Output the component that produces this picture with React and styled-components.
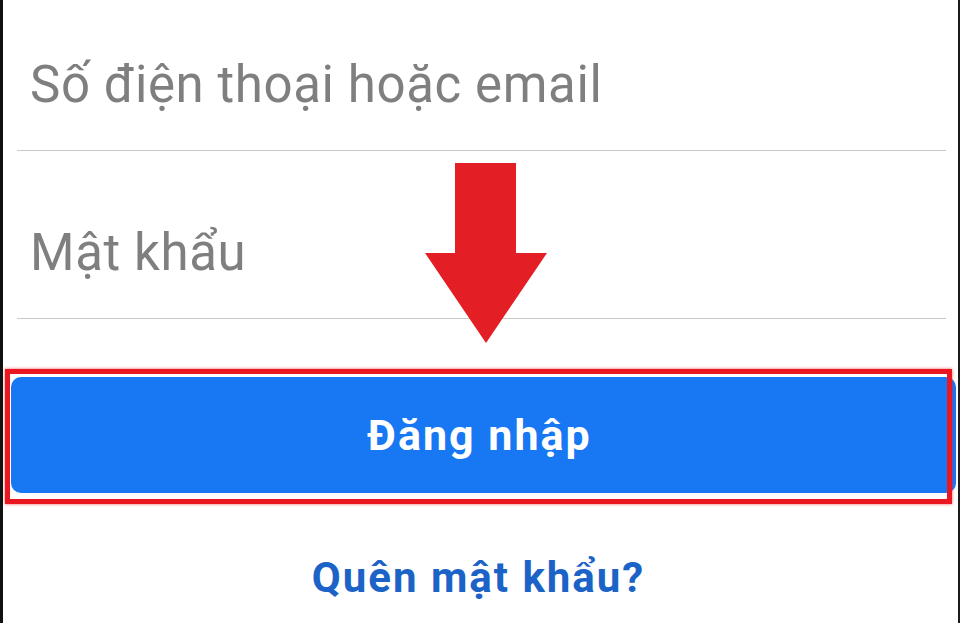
import React from "react";
import styled, { createGlobalStyle } from "styled-components";

const GlobalStyle = createGlobalStyle`
  html, body {
    margin: 0;
    padding: 0;
    background: #ffffff;
  }
  * {
    box-sizing: border-box;
  }
`;

const Frame = styled.div`
  position: relative;
  width: 960px;
  height: 623px;
  overflow: hidden;
  background: #ffffff;
  border-left: 3px solid #111111;
  border-right: 2px solid #1c1c1c;
  font-family: Roboto, "Noto Sans", sans-serif;
  display: flex;
  flex-direction: column;
`;

const Field = styled.div`
  height: ${(p) => p.$height}px;
  margin: 0 12px 0 14px;
  padding: 0 0 40px 13px;
  border-bottom: 1.5px solid #c9c9c9;
  display: flex;
  align-items: flex-end;
`;

const Placeholder = styled.span`
  font-size: 51px;
  line-height: 1;
  letter-spacing: 0.6px;
  color: #7f7f7f;
  font-weight: 400;
`;

const ButtonWrap = styled.div`
  position: relative;
  margin: 58px 2px 0 8px;
`;

const LoginButton = styled.button`
  width: 100%;
  height: 116px;
  padding: 0 8px 0 0;
  border: none;
  border-radius: 10px;
  background: #1877f2;
  color: #ffffff;
  font-family: Roboto, "Noto Sans", sans-serif;
  font-size: 43px;
  font-weight: 700;
  letter-spacing: 2px;
  line-height: 1;
  display: flex;
  align-items: center;
  justify-content: center;
`;

const Highlight = styled.div`
  position: absolute;
  top: -8px;
  left: -6px;
  right: 4px;
  bottom: -11px;
  border: 5px solid #ea1620;
  box-shadow: 0 0 3px rgba(234, 22, 32, 0.7);
  pointer-events: none;
`;

const ForgotLink = styled.a`
  margin-top: 64px;
  margin-right: 4px;
  align-self: center;
  font-size: 42px;
  line-height: 1;
  letter-spacing: 2px;
  font-weight: 700;
  color: #1b63c6;
  text-decoration: none;
`;

const Arrow = styled.svg`
  position: absolute;
  left: 0;
  top: 0;
  pointer-events: none;
`;

export default function App() {
  return (
    <>
      <GlobalStyle />
      <Frame>
        <Field $height={151}>
          <Placeholder>Số điện thoại hoặc email</Placeholder>
        </Field>
        <Field $height={168}>
          <Placeholder>Mật khẩu</Placeholder>
        </Field>
        <ButtonWrap>
          <LoginButton type="button">Đăng nhập</LoginButton>
          <Highlight />
        </ButtonWrap>
        <ForgotLink href="#">Quên mật khẩu?</ForgotLink>
        <Arrow width="955" height="623" viewBox="3 0 955 623">
          <polygon
            points="455,163 516,163 516,253 547,253 486,343 425,253 455,253"
            fill="#e31e24"
          />
        </Arrow>
      </Frame>
    </>
  );
}
